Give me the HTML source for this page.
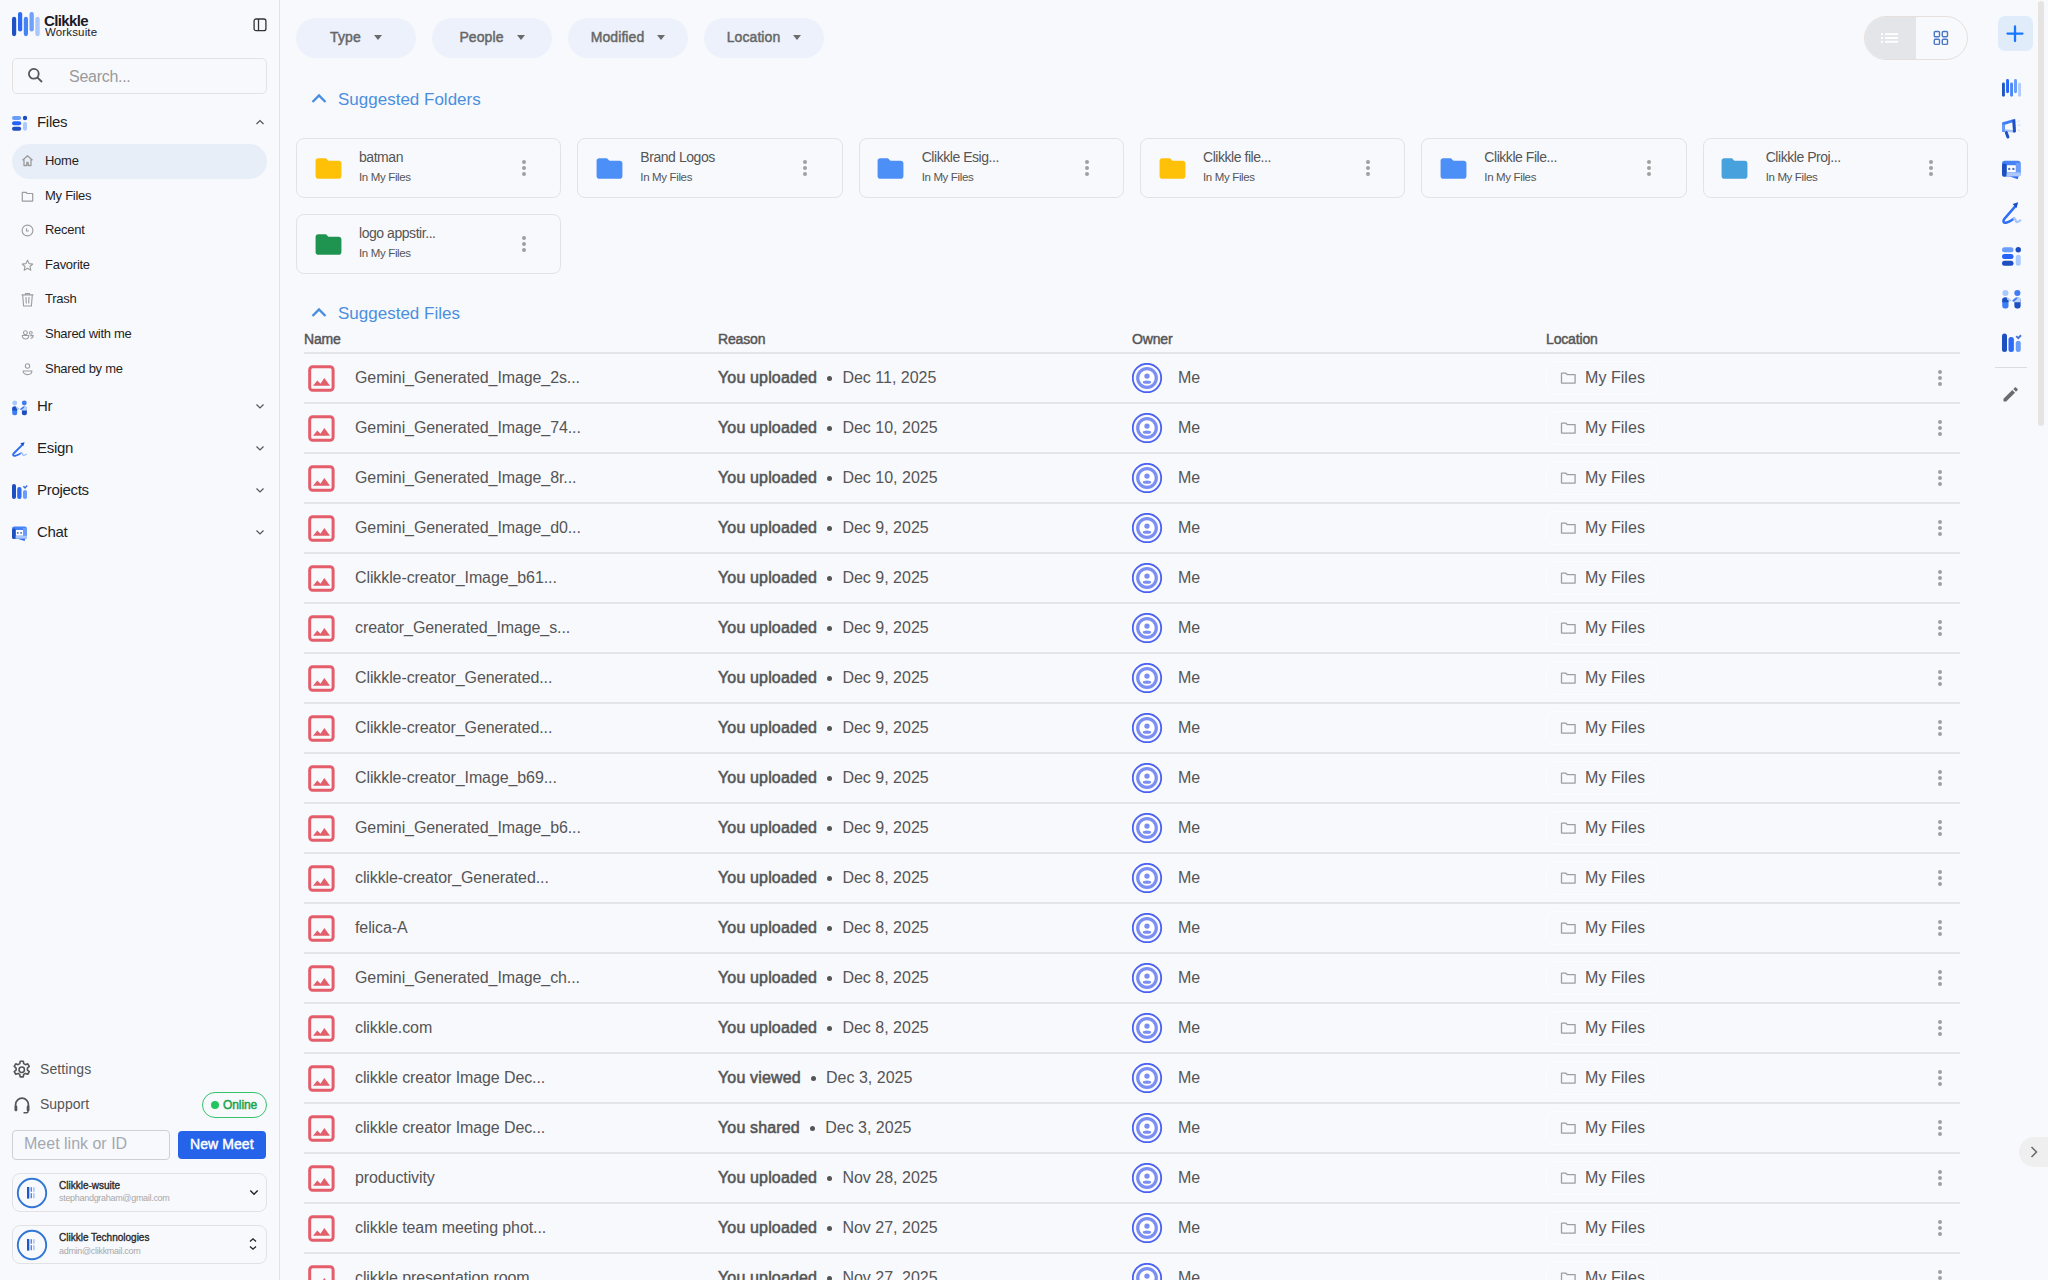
<!DOCTYPE html><html><head><meta charset="utf-8"><title>Clikkle Files</title><style>
*{box-sizing:border-box;margin:0;padding:0}
html,body{width:2048px;height:1280px;overflow:hidden;background:#f8f9fd;font-family:"Liberation Sans",sans-serif;color:#222}
svg{display:block}
.ab{position:absolute;white-space:nowrap}
#side{position:absolute;left:0;top:0;width:280px;height:1280px;border-right:1px solid #e1e1e3}
.nav{position:absolute;left:45px;font-size:13px;color:#1f1f1f;line-height:16px;letter-spacing:-0.27px;white-space:nowrap}
.navi{position:absolute;left:21px}
.sec{position:absolute;left:37px;font-size:15px;color:#1f1f1f;line-height:18px;letter-spacing:-0.3px;white-space:nowrap}
.seci{position:absolute;left:12px}
.chev{position:absolute;left:255px}
.chip{position:absolute;top:18px;width:120px;height:40px;border-radius:20px;background:#edf1fb;font-size:14px;font-weight:normal;-webkit-text-stroke-width:0.45px;color:#666;display:flex;align-items:center;justify-content:center;letter-spacing:0.1px;padding-bottom:2px}
.chip .tri{width:0;height:0;border-left:4.5px solid transparent;border-right:4.5px solid transparent;border-top:5px solid #6b6b6b;margin-left:13px;margin-top:1px}
.card{position:absolute;width:266px;height:60px;border:1px solid #e2e3e8;border-radius:8px}
.card svg.f{position:absolute;left:15.7px;top:13.6px}
.card .t1{position:absolute;left:62px;top:10px;font-size:14px;color:#555;line-height:16px;letter-spacing:-0.45px;white-space:nowrap}
.card .t2{position:absolute;left:62px;top:31px;font-size:11.5px;color:#555;line-height:14px;letter-spacing:-0.35px;white-space:nowrap}
.dots{position:absolute;width:4px;height:16px}
.dots i{display:block;width:4px;height:4px;border-radius:2px;background:#a0a0a0;margin-bottom:2px}
.row{position:absolute;left:304px;width:1656px;height:50px;border-bottom:2px solid #e4e5ea}
.row .ic{position:absolute;left:4px;top:11px}
.row .tx{position:absolute;top:14.6px;font-size:16px;color:#555;line-height:18px;white-space:nowrap}
.row .nm{left:51px;letter-spacing:-0.1px}
.row .rs{left:414px}
.row .rs b{font-weight:normal;-webkit-text-stroke-width:0.55px;letter-spacing:0.15px}
.row .bul{display:inline-block;width:5px;height:5px;border-radius:50%;background:#555;vertical-align:middle;position:relative;top:0.4px;margin:0 10px 0 10.3px}
.row .av{position:absolute;left:828px;top:9px}
.row .me{left:874px}
.row .loc{position:absolute;left:1242px;top:7px;width:112px;height:34px;border:1px solid #fdfdff;border-radius:10px}
.row .locf{position:absolute;left:1256px;top:18px}
.row .lt{left:1281px;letter-spacing:0.05px}
.row .dots{left:1634px;top:16px}
.rail{position:absolute;left:2001px}
</style></head><body>
<div id="side">
<svg class="ab" style="left:0;top:0" width="44" height="44" viewBox="0 0 44 44">
<rect x="12" y="16.8" width="4.2" height="19.4" rx="2.1" fill="#1f50c4"/>
<rect x="18" y="12" width="4.2" height="19.6" rx="2.1" fill="#2a6af6"/>
<rect x="23.8" y="16.8" width="4.2" height="19.4" rx="2.1" fill="#4584f7"/>
<rect x="29.5" y="12" width="4.3" height="19.6" rx="2.1" fill="#6fa1fa"/>
<rect x="35.3" y="16.8" width="4.4" height="19.4" rx="2.2" fill="#abc8fc"/>
</svg>
<div class="ab" style="left:44px;top:12px;font-size:15px;font-weight:bold;color:#1b1b25;line-height:17px;letter-spacing:-0.62px">Clikkle</div>
<div class="ab" style="left:45px;top:26px;font-size:11.5px;color:#1b1b25;line-height:12px;letter-spacing:0.15px">Worksuite</div>
<svg class="ab" style="left:253px;top:18px" width="14" height="14" viewBox="0 0 14 14" fill="none" stroke="#333" stroke-width="1.3">
<rect x="1.1" y="1" width="11.8" height="11.7" rx="2"/><line x1="5.5" y1="1" x2="5.5" y2="12.7"/></svg>
<div class="ab" style="left:12px;top:58px;width:255px;height:36px;border:1px solid #e6e1e1;border-radius:5px"></div>
<svg class="ab" style="left:27px;top:67px" width="17" height="17" viewBox="0 0 17 17" fill="none" stroke="#555" stroke-width="1.8">
<circle cx="6.8" cy="6.8" r="4.9"/><line x1="10.3" y1="10.3" x2="15" y2="15"/></svg>
<div class="ab" style="left:69px;top:68px;font-size:16px;color:#9a9a9a;line-height:18px;letter-spacing:-0.28px">Search...</div>
<div class="seci" style="top:115px"><svg width="16" height="16" viewBox="0 0 16 16">
<rect x="0" y="1" width="9.2" height="4" rx="2" fill="#6a9dfa"/>
<rect x="0" y="6.3" width="9.2" height="4" rx="2" fill="#2563f8"/>
<rect x="0" y="11.8" width="9.2" height="4" rx="2" fill="#1d4fc0"/>
<circle cx="13" cy="3" r="2.2" fill="#1b4dc1"/>
<rect x="11" y="7" width="4" height="8.8" rx="2" fill="#abc9fc"/></svg></div>
<div class="sec" style="top:113px">Files</div>
<svg class="chev" style="top:119px" width="10" height="7" viewBox="0 0 10 7" fill="none" stroke="#555" stroke-width="1.2"><path d="M1.5 5L5 1.5L8.5 5"/></svg>
<div class="ab" style="left:12px;top:144px;width:255px;height:35px;border-radius:17.5px;background:#e8eef8"></div>
<div class="navi" style="top:154.3px"><svg width="13" height="13" viewBox="0 0 13 13" fill="none" stroke="#9c9c9c" stroke-width="1.3" stroke-linejoin="round"><path d="M1.5 6.3L6.5 1.8L11.5 6.3M3 5v6.5h2.8V8.5h1.4v3H10V5"/></svg></div>
<div class="nav" style="top:152.5px">Home</div>
<div class="navi" style="top:189.8px"><svg width="13" height="13" viewBox="0 0 13 13" fill="none" stroke="#9c9c9c" stroke-width="1.2" stroke-linejoin="round"><path d="M1.3 2.4h3.8l1 1.1h5.6v7.6H1.3z"/></svg></div>
<div class="nav" style="top:188.0px">My Files</div>
<div class="navi" style="top:224.10000000000002px"><svg width="13" height="13" viewBox="0 0 13 13" fill="none" stroke="#9c9c9c" stroke-width="1.1"><circle cx="6.5" cy="6.5" r="5.4"/><path d="M5.5 4.2v2.8h2.3"/></svg></div>
<div class="nav" style="top:222.3px">Recent</div>
<div class="navi" style="top:258.6px"><svg width="13" height="13" viewBox="0 0 13 13" fill="none" stroke="#9c9c9c" stroke-width="1.1" stroke-linejoin="round"><path d="M6.5 1.2l1.55 3.4l3.7.4l-2.75 2.5l.8 3.65L6.5 9.3l-3.3 1.85l.8-3.65L1.25 5l3.7-.4z"/></svg></div>
<div class="nav" style="top:256.8px">Favorite</div>
<div class="navi" style="top:291.5px"><svg width="13" height="15" viewBox="0 0 13 15" fill="none" stroke="#9c9c9c" stroke-width="1.1" stroke-linejoin="round"><path d="M0.6 2.9H12.4M4.5 2.8V1.5H8.5V2.8M1.7 2.9L2.6 14H10.4L11.3 2.9M5 5L5.3 11.5M8 5L7.7 11.5"/></svg></div>
<div class="nav" style="top:291.1px">Trash</div>
<div class="navi" style="top:327.8px"><svg width="13" height="13" viewBox="0 0 13 13" fill="none" stroke="#9c9c9c" stroke-width="1.05"><circle cx="4.4" cy="4.7" r="1.9"/><path d="M1.2 7.5H7.8C7.8 9.7 6.3 10.9 4.5 10.9C2.7 10.9 1.2 9.7 1.2 7.5z"/><circle cx="9.8" cy="4.8" r="1.4"/><path d="M9.3 7.6H12.2C12.2 9.3 11.2 10.2 9.7 10.4"/></svg></div>
<div class="nav" style="top:326.0px">Shared with me</div>
<div class="navi" style="top:362.5px"><svg width="13" height="13" viewBox="0 0 13 13" fill="none" stroke="#9c9c9c" stroke-width="1.05"><circle cx="6.5" cy="3" r="2.2"/><path d="M2.1 8H10.9C10.9 10.4 9 11.6 6.5 11.6C4 11.6 2.1 10.4 2.1 8z"/></svg></div>
<div class="nav" style="top:360.7px">Shared by me</div>
<div class="seci" style="top:398.5px"><svg width="16" height="16" viewBox="0 0 16 16" overflow="visible">
<circle cx="2.75" cy="3.95" r="2.45" fill="#a9c8fc"/>
<circle cx="12.3" cy="3.95" r="2.45" fill="#3f7cf5"/>
<path d="M0.2 9.6a2.1 2.1 0 0 1 2.1-2.1h0.8a2.1 2.1 0 0 1 2.1 2.1V14.2a2.1 2.1 0 0 1-2.1 2.1h-0.8a2.1 2.1 0 0 1-2.1-2.1z" fill="#3d7ef7"/>
<path d="M0.2 9.6a2.1 2.1 0 0 1 2.1-2.1h0.8a2.1 2.1 0 0 1 2.1 2.1V11.4H0.2z" fill="#1c4fc0"/>
<path d="M9.9 9.6a2.1 2.1 0 0 1 2.1-2.1h0.8a2.1 2.1 0 0 1 2.1 2.1V14.2a2.1 2.1 0 0 1-2.1 2.1h-0.8a2.1 2.1 0 0 1-2.1-2.1z" fill="#1d4fc0"/>
<path d="M9.9 9.6a2.1 2.1 0 0 1 2.1-2.1h0.8a2.1 2.1 0 0 1 2.1 2.1V11.4H9.9z" fill="#bcd4fc"/>
<path d="M4.6 8.7L6.6 10" stroke="#a9c8fc" stroke-width="1.5" stroke-linecap="round"/>
<path d="M9 10.2L11.4 8.4" stroke="#3f7cf5" stroke-width="1.5" stroke-linecap="round"/></svg></div>
<div class="sec" style="top:396.5px">Hr</div>
<svg class="chev" style="top:403.0px" width="10" height="7" viewBox="0 0 10 7" fill="none" stroke="#555" stroke-width="1.2"><path d="M1.5 1.5L5 5L8.5 1.5"/></svg>
<div class="seci" style="top:441.5px;left:11.8px"><svg width="15.2" height="15" viewBox="6 4.5 19.5 22.5" preserveAspectRatio="none" fill="none">
<path d="M19.2 8.8L8.3 21.5C6.8 23.5 7.5 25.6 10 25.2C12.8 24.8 15.5 22.8 17.8 21.2" stroke="#2f6ef5" stroke-width="2.6" stroke-linecap="round"/>
<path d="M17.8 21.2C19.5 20.2 19.4 23.2 20.3 24.2C21.3 25.1 23 24 24.3 22.8" stroke="#a8c5fb" stroke-width="2.2" stroke-linecap="round"/>
<path d="M22.2 4.7L16.6 6.5L20.5 10.4z" fill="#1a4cc8"/></svg></div>
<div class="sec" style="top:438.5px">Esign</div>
<svg class="chev" style="top:445.0px" width="10" height="7" viewBox="0 0 10 7" fill="none" stroke="#555" stroke-width="1.2"><path d="M1.5 1.5L5 5L8.5 1.5"/></svg>
<div class="seci" style="top:482.5px"><svg width="16" height="16" viewBox="0 0 16 16">
<rect x="0" y="1.1" width="4" height="14.8" rx="2" fill="#1d4fc0"/>
<rect x="5.2" y="3.9" width="4.3" height="12" rx="2" fill="#2a6cf8"/>
<rect x="11" y="7" width="4" height="8.9" rx="2" fill="#6a9dfa"/>
<path d="M11.4 3.3l1.6 1.6l2.2-2.3" stroke="#4672d8" stroke-width="1.5" fill="none"/></svg></div>
<div class="sec" style="top:480.5px">Projects</div>
<svg class="chev" style="top:487.0px" width="10" height="7" viewBox="0 0 10 7" fill="none" stroke="#555" stroke-width="1.2"><path d="M1.5 1.5L5 5L8.5 1.5"/></svg>
<div class="seci" style="top:524.5px"><svg width="16" height="16" viewBox="0 0 16 16" overflow="visible">
<rect x="0" y="1.4" width="14.85" height="12.6" rx="2.2" fill="#4581f7"/>
<rect x="11" y="3" width="3.85" height="9" fill="#6b9cf8"/>
<rect x="0" y="3.6" width="3.8" height="10.5" rx="1.8" fill="#1f50c0"/>
<rect x="3.7" y="10.8" width="11.15" height="2.8" fill="#abc7fc"/>
<path d="M6.3 13.9H13.2L12.6 16.1z" fill="#2a6af6"/>
<rect x="3.9" y="5" width="7.1" height="5.6" fill="#fff"/>
<circle cx="5.8" cy="7.9" r="0.95" fill="#4a70c8"/>
<circle cx="9.1" cy="7.9" r="0.95" fill="#4a70c8"/></svg></div>
<div class="sec" style="top:522.5px">Chat</div>
<svg class="chev" style="top:529.0px" width="10" height="7" viewBox="0 0 10 7" fill="none" stroke="#555" stroke-width="1.2"><path d="M1.5 1.5L5 5L8.5 1.5"/></svg>
<svg class="ab" style="left:11.2px;top:1058.8px" width="21.5" height="21.5" viewBox="0 0 24 24" fill="none" stroke="#555" stroke-width="1.8" stroke-linejoin="round">
<path d="M10.3 2.5h3.4l.5 2.7l1.9 1.1l2.6-.9l1.7 2.9l-2.1 1.8v2.2l2.1 1.8l-1.7 2.9l-2.6-.9l-1.9 1.1l-.5 2.7h-3.4l-.5-2.7l-1.9-1.1l-2.6.9l-1.7-2.9l2.1-1.8v-2.2l-2.1-1.8l1.7-2.9l2.6.9l1.9-1.1z"/>
<circle cx="12" cy="12" r="3"/></svg>
<div class="ab" style="left:40px;top:1060px;font-size:14px;color:#555;line-height:18px;letter-spacing:0.08px">Settings</div>
<svg class="ab" style="left:12.5px;top:1096px" width="18" height="18" viewBox="0 0 18 18" fill="none" stroke="#555">
<path d="M2.6 11V8.6a6.4 6.4 0 0 1 12.8 0V11" stroke-width="1.7"/>
<rect x="1.5" y="9.6" width="2.8" height="5.6" rx="1.3" fill="#555" stroke="none"/>
<rect x="13.7" y="9.6" width="2.8" height="5.6" rx="1.3" fill="#555" stroke="none"/>
<path d="M15 14.8v.6c0 .9-.6 1.4-1.4 1.4H10.5" stroke-width="1.5"/></svg>
<div class="ab" style="left:40px;top:1095px;font-size:14px;color:#555;line-height:18px">Support</div>
<div class="ab" style="left:202px;top:1092px;width:65px;height:26px;border:1.5px solid #35c46b;border-radius:13px"></div>
<div class="ab" style="left:211px;top:1100.6px;width:8px;height:8px;border-radius:4px;background:#22c55e"></div>
<div class="ab" style="left:223px;top:1098px;font-size:12px;font-weight:normal;-webkit-text-stroke-width:0.45px;color:#17a34a;line-height:14px;letter-spacing:-0.08px">Online</div>
<div class="ab" style="left:12px;top:1130px;width:158px;height:30px;border:1px solid #cfd0d4;border-radius:4px"></div>
<div class="ab" style="left:24px;top:1135px;font-size:16px;color:#a4a8b0;line-height:18px">Meet link or ID</div>
<div class="ab" style="left:178px;top:1131px;width:88px;height:28px;border-radius:4px;background:#2563eb"></div>
<div class="ab" style="left:190px;top:1136px;font-size:14px;font-weight:normal;-webkit-text-stroke-width:0.45px;color:#fff;line-height:17px;letter-spacing:0.08px">New Meet</div>
<div class="ab" style="left:12px;top:1173px;width:255px;height:39px;border:1px solid #e3e1e1;border-radius:8px"></div><svg class="ab" style="left:16px;top:1177px" width="32" height="32" viewBox="0 0 32 32">
<circle cx="16" cy="16" r="14.2" fill="none" stroke="#3277d6" stroke-width="1.9"/>
<rect x="11" y="10" width="2.3" height="11.6" fill="#1f55c8"/>
<rect x="14.6" y="10.2" width="1.3" height="4.5" fill="#3a7bf0"/>
<rect x="14.6" y="16.2" width="1.3" height="5" fill="#3a7bf0"/>
<rect x="17.3" y="10.2" width="1.2" height="4.5" fill="#8fb5f8"/>
<rect x="17.3" y="16.2" width="1.2" height="5" fill="#8fb5f8"/></svg><div class="ab" style="left:59px;top:1180px;font-size:10px;font-weight:normal;-webkit-text-stroke-width:0.35px;color:#2a2a2a;line-height:12px;letter-spacing:0px">Clikkle-wsuite</div><div class="ab" style="left:59px;top:1193px;font-size:9px;color:#a8a8a8;line-height:11px;letter-spacing:-0.3px">stephandgraham@gmail.com</div><svg class="ab" style="left:249px;top:1189px" width="10" height="7" viewBox="0 0 10 7" fill="none" stroke="#222" stroke-width="1.4"><path d="M1.3 1.5L5 5.2L8.7 1.5"/></svg>
<div class="ab" style="left:12px;top:1225px;width:255px;height:39px;border:1px solid #e3e1e1;border-radius:8px"></div><svg class="ab" style="left:16px;top:1229px" width="32" height="32" viewBox="0 0 32 32">
<circle cx="16" cy="16" r="14.2" fill="none" stroke="#3277d6" stroke-width="1.9"/>
<rect x="11" y="10" width="2.3" height="11.6" fill="#1f55c8"/>
<rect x="14.6" y="10.2" width="1.3" height="4.5" fill="#3a7bf0"/>
<rect x="14.6" y="16.2" width="1.3" height="5" fill="#3a7bf0"/>
<rect x="17.3" y="10.2" width="1.2" height="4.5" fill="#8fb5f8"/>
<rect x="17.3" y="16.2" width="1.2" height="5" fill="#8fb5f8"/></svg><div class="ab" style="left:59px;top:1231.5px;font-size:10px;font-weight:normal;-webkit-text-stroke-width:0.35px;color:#2a2a2a;line-height:12px;letter-spacing:0px">Clikkle Technologies</div><div class="ab" style="left:59px;top:1246px;font-size:9px;color:#a8a8a8;line-height:11px;letter-spacing:-0.3px">admin@clikkmail.com</div><svg class="ab" style="left:248px;top:1237px" width="10" height="14" viewBox="0 0 10 14" fill="none" stroke="#222" stroke-width="1.3"><path d="M2 4.5L5 1.8L8 4.5M2 9.5L5 12.2L8 9.5"/></svg>
</div>
<div class="chip" style="left:296px">Type<span class="tri"></span></div>
<div class="chip" style="left:432px">People<span class="tri"></span></div>
<div class="chip" style="left:568px">Modified<span class="tri"></span></div>
<div class="chip" style="left:704px">Location<span class="tri"></span></div>
<div class="ab" style="left:1864px;top:16px;width:104px;height:44px;border:1px solid #e6e0dd;border-radius:22px;overflow:hidden"><div style="position:absolute;left:0;top:0;width:51px;height:44px;background:#e4e5e9"></div></div>
<svg class="ab" style="left:1880px;top:32px" width="20" height="12" viewBox="0 0 20 12" fill="#fff">
<rect x="1" y="1.2" width="2" height="2"/><rect x="1" y="5" width="2" height="2"/><rect x="1" y="8.8" width="2" height="2"/>
<rect x="5" y="1.2" width="13.2" height="1.9"/><rect x="5" y="5" width="13.2" height="1.9"/><rect x="5" y="8.8" width="13.2" height="1.9"/></svg>
<svg class="ab" style="left:1932px;top:30px" width="18" height="16" viewBox="0 0 18 16" fill="none" stroke="#4a78c2" stroke-width="1.4">
<rect x="2.3" y="1.5" width="5.2" height="5.2" rx="1"/><rect x="10.3" y="1.5" width="5.2" height="5.2" rx="1"/>
<rect x="2.3" y="9.2" width="5.2" height="5.2" rx="1"/><rect x="10.3" y="9.2" width="5.2" height="5.2" rx="1"/></svg>
<div class="ab" style="left:1998px;top:16px;width:35px;height:35px;border-radius:7px;background:#e1ecfa"></div>
<svg class="ab" style="left:2005px;top:24px" width="20" height="20" viewBox="0 0 20 20" stroke="#1677ff" stroke-width="2.3" stroke-linecap="round"><path d="M10 2.5v14.5M2.5 9.6h15"/></svg>
<svg class="ab" style="left:310px;top:92px" width="18" height="12" viewBox="0 0 18 12" fill="none" stroke="#4a8ee0" stroke-width="2.4"><path d="M2.5 10L9 3.5L15.5 10"/></svg><div class="ab" style="left:338px;top:89.5px;font-size:17px;color:#4a8fe0;line-height:20px">Suggested Folders</div>
<div class="card" style="left:296.00px;top:138px;width:265.33px"><svg class="f" width="31" height="31" viewBox="0 0 24 24"><path fill="#ffc107" d="M10 4H4c-1.1 0-2 .9-2 2v12c0 1.1.9 2 2 2h16c1.1 0 2-.9 2-2V8c0-1.1-.9-2-2-2h-8l-2-2z"/></svg><div class="t1">batman</div><div class="t2">In My Files</div><div class="dots" style="left:225px;top:21px"><i></i><i></i><i></i></div></div>
<div class="card" style="left:577.33px;top:138px;width:265.33px"><svg class="f" width="31" height="31" viewBox="0 0 24 24"><path fill="#4b8ff7" d="M10 4H4c-1.1 0-2 .9-2 2v12c0 1.1.9 2 2 2h16c1.1 0 2-.9 2-2V8c0-1.1-.9-2-2-2h-8l-2-2z"/></svg><div class="t1">Brand Logos</div><div class="t2">In My Files</div><div class="dots" style="left:225px;top:21px"><i></i><i></i><i></i></div></div>
<div class="card" style="left:858.67px;top:138px;width:265.33px"><svg class="f" width="31" height="31" viewBox="0 0 24 24"><path fill="#4b8ff7" d="M10 4H4c-1.1 0-2 .9-2 2v12c0 1.1.9 2 2 2h16c1.1 0 2-.9 2-2V8c0-1.1-.9-2-2-2h-8l-2-2z"/></svg><div class="t1">Clikkle Esig...</div><div class="t2">In My Files</div><div class="dots" style="left:225px;top:21px"><i></i><i></i><i></i></div></div>
<div class="card" style="left:1140.00px;top:138px;width:265.33px"><svg class="f" width="31" height="31" viewBox="0 0 24 24"><path fill="#ffc107" d="M10 4H4c-1.1 0-2 .9-2 2v12c0 1.1.9 2 2 2h16c1.1 0 2-.9 2-2V8c0-1.1-.9-2-2-2h-8l-2-2z"/></svg><div class="t1">Clikkle file...</div><div class="t2">In My Files</div><div class="dots" style="left:225px;top:21px"><i></i><i></i><i></i></div></div>
<div class="card" style="left:1421.33px;top:138px;width:265.33px"><svg class="f" width="31" height="31" viewBox="0 0 24 24"><path fill="#4b8ff7" d="M10 4H4c-1.1 0-2 .9-2 2v12c0 1.1.9 2 2 2h16c1.1 0 2-.9 2-2V8c0-1.1-.9-2-2-2h-8l-2-2z"/></svg><div class="t1">Clikkle File...</div><div class="t2">In My Files</div><div class="dots" style="left:225px;top:21px"><i></i><i></i><i></i></div></div>
<div class="card" style="left:1702.67px;top:138px;width:265.33px"><svg class="f" width="31" height="31" viewBox="0 0 24 24"><path fill="#47a1dd" d="M10 4H4c-1.1 0-2 .9-2 2v12c0 1.1.9 2 2 2h16c1.1 0 2-.9 2-2V8c0-1.1-.9-2-2-2h-8l-2-2z"/></svg><div class="t1">Clikkle Proj...</div><div class="t2">In My Files</div><div class="dots" style="left:225px;top:21px"><i></i><i></i><i></i></div></div>
<div class="card" style="left:296.00px;top:214px;width:265.33px"><svg class="f" width="31" height="31" viewBox="0 0 24 24"><path fill="#1f9450" d="M10 4H4c-1.1 0-2 .9-2 2v12c0 1.1.9 2 2 2h16c1.1 0 2-.9 2-2V8c0-1.1-.9-2-2-2h-8l-2-2z"/></svg><div class="t1">logo appstir...</div><div class="t2">In My Files</div><div class="dots" style="left:225px;top:21px"><i></i><i></i><i></i></div></div>
<svg class="ab" style="left:310px;top:306px" width="18" height="12" viewBox="0 0 18 12" fill="none" stroke="#4a8ee0" stroke-width="2.4"><path d="M2.5 10L9 3.5L15.5 10"/></svg><div class="ab" style="left:338px;top:303.5px;font-size:17px;color:#4a8fe0;line-height:20px">Suggested Files</div>
<div class="ab" style="left:304px;top:331px;font-size:14px;font-weight:normal;-webkit-text-stroke-width:0.45px;color:#555;line-height:16px;letter-spacing:-0.15px">Name</div>
<div class="ab" style="left:718px;top:331px;font-size:14px;font-weight:normal;-webkit-text-stroke-width:0.45px;color:#555;line-height:16px;letter-spacing:-0.15px">Reason</div>
<div class="ab" style="left:1132px;top:331px;font-size:14px;font-weight:normal;-webkit-text-stroke-width:0.45px;color:#555;line-height:16px;letter-spacing:-0.15px">Owner</div>
<div class="ab" style="left:1546px;top:331px;font-size:14px;font-weight:normal;-webkit-text-stroke-width:0.45px;color:#555;line-height:16px;letter-spacing:-0.15px">Location</div>
<div class="ab" style="left:304px;top:352px;width:1656px;height:2px;background:#e4e5ea"></div>
<div class="row" style="top:354px"><svg class="ic" width="28" height="28" viewBox="0 0 28 28">
<rect x="1.7" y="1.8" width="23.4" height="23.4" rx="3" fill="none" stroke="#e35d6a" stroke-width="3"/>
<path d="M5 20.8L9.3 15.5L12.5 18.7L16.3 13.1L22 20.8z" fill="#e35d6a"/></svg><div class="tx nm">Gemini_Generated_Image_2s...</div><div class="tx rs"><b>You uploaded</b><span class="bul"></span>Dec 11, 2025</div><svg class="av" width="38" height="38" viewBox="0 0 38 38">
<circle cx="15" cy="15" r="14.2" fill="none" stroke="#4a60f2" stroke-width="1.8"/>
<circle cx="15" cy="15" r="10.9" fill="#7b8ff3"/>
<circle cx="15" cy="15" r="7.7" fill="#fff"/>
<circle cx="15" cy="13.1" r="2.7" fill="#7b8ff3"/>
<ellipse cx="15" cy="19.2" rx="4.2" ry="1.6" fill="#7b8ff3"/></svg><div class="tx me">Me</div><div class="loc"></div><svg class="locf" width="17" height="14" viewBox="0 0 17 14" fill="none" stroke="#9e9e9e" stroke-width="1.3" stroke-linejoin="round"><path d="M1.5 1.2h4.4l1.4 1.4h7.8v8.5H1.5z"/></svg><div class="tx lt">My Files</div><div class="dots"><i></i><i></i><i></i></div></div>
<div class="row" style="top:404px"><svg class="ic" width="28" height="28" viewBox="0 0 28 28">
<rect x="1.7" y="1.8" width="23.4" height="23.4" rx="3" fill="none" stroke="#e35d6a" stroke-width="3"/>
<path d="M5 20.8L9.3 15.5L12.5 18.7L16.3 13.1L22 20.8z" fill="#e35d6a"/></svg><div class="tx nm">Gemini_Generated_Image_74...</div><div class="tx rs"><b>You uploaded</b><span class="bul"></span>Dec 10, 2025</div><svg class="av" width="38" height="38" viewBox="0 0 38 38">
<circle cx="15" cy="15" r="14.2" fill="none" stroke="#4a60f2" stroke-width="1.8"/>
<circle cx="15" cy="15" r="10.9" fill="#7b8ff3"/>
<circle cx="15" cy="15" r="7.7" fill="#fff"/>
<circle cx="15" cy="13.1" r="2.7" fill="#7b8ff3"/>
<ellipse cx="15" cy="19.2" rx="4.2" ry="1.6" fill="#7b8ff3"/></svg><div class="tx me">Me</div><div class="loc"></div><svg class="locf" width="17" height="14" viewBox="0 0 17 14" fill="none" stroke="#9e9e9e" stroke-width="1.3" stroke-linejoin="round"><path d="M1.5 1.2h4.4l1.4 1.4h7.8v8.5H1.5z"/></svg><div class="tx lt">My Files</div><div class="dots"><i></i><i></i><i></i></div></div>
<div class="row" style="top:454px"><svg class="ic" width="28" height="28" viewBox="0 0 28 28">
<rect x="1.7" y="1.8" width="23.4" height="23.4" rx="3" fill="none" stroke="#e35d6a" stroke-width="3"/>
<path d="M5 20.8L9.3 15.5L12.5 18.7L16.3 13.1L22 20.8z" fill="#e35d6a"/></svg><div class="tx nm">Gemini_Generated_Image_8r...</div><div class="tx rs"><b>You uploaded</b><span class="bul"></span>Dec 10, 2025</div><svg class="av" width="38" height="38" viewBox="0 0 38 38">
<circle cx="15" cy="15" r="14.2" fill="none" stroke="#4a60f2" stroke-width="1.8"/>
<circle cx="15" cy="15" r="10.9" fill="#7b8ff3"/>
<circle cx="15" cy="15" r="7.7" fill="#fff"/>
<circle cx="15" cy="13.1" r="2.7" fill="#7b8ff3"/>
<ellipse cx="15" cy="19.2" rx="4.2" ry="1.6" fill="#7b8ff3"/></svg><div class="tx me">Me</div><div class="loc"></div><svg class="locf" width="17" height="14" viewBox="0 0 17 14" fill="none" stroke="#9e9e9e" stroke-width="1.3" stroke-linejoin="round"><path d="M1.5 1.2h4.4l1.4 1.4h7.8v8.5H1.5z"/></svg><div class="tx lt">My Files</div><div class="dots"><i></i><i></i><i></i></div></div>
<div class="row" style="top:504px"><svg class="ic" width="28" height="28" viewBox="0 0 28 28">
<rect x="1.7" y="1.8" width="23.4" height="23.4" rx="3" fill="none" stroke="#e35d6a" stroke-width="3"/>
<path d="M5 20.8L9.3 15.5L12.5 18.7L16.3 13.1L22 20.8z" fill="#e35d6a"/></svg><div class="tx nm">Gemini_Generated_Image_d0...</div><div class="tx rs"><b>You uploaded</b><span class="bul"></span>Dec 9, 2025</div><svg class="av" width="38" height="38" viewBox="0 0 38 38">
<circle cx="15" cy="15" r="14.2" fill="none" stroke="#4a60f2" stroke-width="1.8"/>
<circle cx="15" cy="15" r="10.9" fill="#7b8ff3"/>
<circle cx="15" cy="15" r="7.7" fill="#fff"/>
<circle cx="15" cy="13.1" r="2.7" fill="#7b8ff3"/>
<ellipse cx="15" cy="19.2" rx="4.2" ry="1.6" fill="#7b8ff3"/></svg><div class="tx me">Me</div><div class="loc"></div><svg class="locf" width="17" height="14" viewBox="0 0 17 14" fill="none" stroke="#9e9e9e" stroke-width="1.3" stroke-linejoin="round"><path d="M1.5 1.2h4.4l1.4 1.4h7.8v8.5H1.5z"/></svg><div class="tx lt">My Files</div><div class="dots"><i></i><i></i><i></i></div></div>
<div class="row" style="top:554px"><svg class="ic" width="28" height="28" viewBox="0 0 28 28">
<rect x="1.7" y="1.8" width="23.4" height="23.4" rx="3" fill="none" stroke="#e35d6a" stroke-width="3"/>
<path d="M5 20.8L9.3 15.5L12.5 18.7L16.3 13.1L22 20.8z" fill="#e35d6a"/></svg><div class="tx nm">Clikkle-creator_Image_b61...</div><div class="tx rs"><b>You uploaded</b><span class="bul"></span>Dec 9, 2025</div><svg class="av" width="38" height="38" viewBox="0 0 38 38">
<circle cx="15" cy="15" r="14.2" fill="none" stroke="#4a60f2" stroke-width="1.8"/>
<circle cx="15" cy="15" r="10.9" fill="#7b8ff3"/>
<circle cx="15" cy="15" r="7.7" fill="#fff"/>
<circle cx="15" cy="13.1" r="2.7" fill="#7b8ff3"/>
<ellipse cx="15" cy="19.2" rx="4.2" ry="1.6" fill="#7b8ff3"/></svg><div class="tx me">Me</div><div class="loc"></div><svg class="locf" width="17" height="14" viewBox="0 0 17 14" fill="none" stroke="#9e9e9e" stroke-width="1.3" stroke-linejoin="round"><path d="M1.5 1.2h4.4l1.4 1.4h7.8v8.5H1.5z"/></svg><div class="tx lt">My Files</div><div class="dots"><i></i><i></i><i></i></div></div>
<div class="row" style="top:604px"><svg class="ic" width="28" height="28" viewBox="0 0 28 28">
<rect x="1.7" y="1.8" width="23.4" height="23.4" rx="3" fill="none" stroke="#e35d6a" stroke-width="3"/>
<path d="M5 20.8L9.3 15.5L12.5 18.7L16.3 13.1L22 20.8z" fill="#e35d6a"/></svg><div class="tx nm">creator_Generated_Image_s...</div><div class="tx rs"><b>You uploaded</b><span class="bul"></span>Dec 9, 2025</div><svg class="av" width="38" height="38" viewBox="0 0 38 38">
<circle cx="15" cy="15" r="14.2" fill="none" stroke="#4a60f2" stroke-width="1.8"/>
<circle cx="15" cy="15" r="10.9" fill="#7b8ff3"/>
<circle cx="15" cy="15" r="7.7" fill="#fff"/>
<circle cx="15" cy="13.1" r="2.7" fill="#7b8ff3"/>
<ellipse cx="15" cy="19.2" rx="4.2" ry="1.6" fill="#7b8ff3"/></svg><div class="tx me">Me</div><div class="loc"></div><svg class="locf" width="17" height="14" viewBox="0 0 17 14" fill="none" stroke="#9e9e9e" stroke-width="1.3" stroke-linejoin="round"><path d="M1.5 1.2h4.4l1.4 1.4h7.8v8.5H1.5z"/></svg><div class="tx lt">My Files</div><div class="dots"><i></i><i></i><i></i></div></div>
<div class="row" style="top:654px"><svg class="ic" width="28" height="28" viewBox="0 0 28 28">
<rect x="1.7" y="1.8" width="23.4" height="23.4" rx="3" fill="none" stroke="#e35d6a" stroke-width="3"/>
<path d="M5 20.8L9.3 15.5L12.5 18.7L16.3 13.1L22 20.8z" fill="#e35d6a"/></svg><div class="tx nm">Clikkle-creator_Generated...</div><div class="tx rs"><b>You uploaded</b><span class="bul"></span>Dec 9, 2025</div><svg class="av" width="38" height="38" viewBox="0 0 38 38">
<circle cx="15" cy="15" r="14.2" fill="none" stroke="#4a60f2" stroke-width="1.8"/>
<circle cx="15" cy="15" r="10.9" fill="#7b8ff3"/>
<circle cx="15" cy="15" r="7.7" fill="#fff"/>
<circle cx="15" cy="13.1" r="2.7" fill="#7b8ff3"/>
<ellipse cx="15" cy="19.2" rx="4.2" ry="1.6" fill="#7b8ff3"/></svg><div class="tx me">Me</div><div class="loc"></div><svg class="locf" width="17" height="14" viewBox="0 0 17 14" fill="none" stroke="#9e9e9e" stroke-width="1.3" stroke-linejoin="round"><path d="M1.5 1.2h4.4l1.4 1.4h7.8v8.5H1.5z"/></svg><div class="tx lt">My Files</div><div class="dots"><i></i><i></i><i></i></div></div>
<div class="row" style="top:704px"><svg class="ic" width="28" height="28" viewBox="0 0 28 28">
<rect x="1.7" y="1.8" width="23.4" height="23.4" rx="3" fill="none" stroke="#e35d6a" stroke-width="3"/>
<path d="M5 20.8L9.3 15.5L12.5 18.7L16.3 13.1L22 20.8z" fill="#e35d6a"/></svg><div class="tx nm">Clikkle-creator_Generated...</div><div class="tx rs"><b>You uploaded</b><span class="bul"></span>Dec 9, 2025</div><svg class="av" width="38" height="38" viewBox="0 0 38 38">
<circle cx="15" cy="15" r="14.2" fill="none" stroke="#4a60f2" stroke-width="1.8"/>
<circle cx="15" cy="15" r="10.9" fill="#7b8ff3"/>
<circle cx="15" cy="15" r="7.7" fill="#fff"/>
<circle cx="15" cy="13.1" r="2.7" fill="#7b8ff3"/>
<ellipse cx="15" cy="19.2" rx="4.2" ry="1.6" fill="#7b8ff3"/></svg><div class="tx me">Me</div><div class="loc"></div><svg class="locf" width="17" height="14" viewBox="0 0 17 14" fill="none" stroke="#9e9e9e" stroke-width="1.3" stroke-linejoin="round"><path d="M1.5 1.2h4.4l1.4 1.4h7.8v8.5H1.5z"/></svg><div class="tx lt">My Files</div><div class="dots"><i></i><i></i><i></i></div></div>
<div class="row" style="top:754px"><svg class="ic" width="28" height="28" viewBox="0 0 28 28">
<rect x="1.7" y="1.8" width="23.4" height="23.4" rx="3" fill="none" stroke="#e35d6a" stroke-width="3"/>
<path d="M5 20.8L9.3 15.5L12.5 18.7L16.3 13.1L22 20.8z" fill="#e35d6a"/></svg><div class="tx nm">Clikkle-creator_Image_b69...</div><div class="tx rs"><b>You uploaded</b><span class="bul"></span>Dec 9, 2025</div><svg class="av" width="38" height="38" viewBox="0 0 38 38">
<circle cx="15" cy="15" r="14.2" fill="none" stroke="#4a60f2" stroke-width="1.8"/>
<circle cx="15" cy="15" r="10.9" fill="#7b8ff3"/>
<circle cx="15" cy="15" r="7.7" fill="#fff"/>
<circle cx="15" cy="13.1" r="2.7" fill="#7b8ff3"/>
<ellipse cx="15" cy="19.2" rx="4.2" ry="1.6" fill="#7b8ff3"/></svg><div class="tx me">Me</div><div class="loc"></div><svg class="locf" width="17" height="14" viewBox="0 0 17 14" fill="none" stroke="#9e9e9e" stroke-width="1.3" stroke-linejoin="round"><path d="M1.5 1.2h4.4l1.4 1.4h7.8v8.5H1.5z"/></svg><div class="tx lt">My Files</div><div class="dots"><i></i><i></i><i></i></div></div>
<div class="row" style="top:804px"><svg class="ic" width="28" height="28" viewBox="0 0 28 28">
<rect x="1.7" y="1.8" width="23.4" height="23.4" rx="3" fill="none" stroke="#e35d6a" stroke-width="3"/>
<path d="M5 20.8L9.3 15.5L12.5 18.7L16.3 13.1L22 20.8z" fill="#e35d6a"/></svg><div class="tx nm">Gemini_Generated_Image_b6...</div><div class="tx rs"><b>You uploaded</b><span class="bul"></span>Dec 9, 2025</div><svg class="av" width="38" height="38" viewBox="0 0 38 38">
<circle cx="15" cy="15" r="14.2" fill="none" stroke="#4a60f2" stroke-width="1.8"/>
<circle cx="15" cy="15" r="10.9" fill="#7b8ff3"/>
<circle cx="15" cy="15" r="7.7" fill="#fff"/>
<circle cx="15" cy="13.1" r="2.7" fill="#7b8ff3"/>
<ellipse cx="15" cy="19.2" rx="4.2" ry="1.6" fill="#7b8ff3"/></svg><div class="tx me">Me</div><div class="loc"></div><svg class="locf" width="17" height="14" viewBox="0 0 17 14" fill="none" stroke="#9e9e9e" stroke-width="1.3" stroke-linejoin="round"><path d="M1.5 1.2h4.4l1.4 1.4h7.8v8.5H1.5z"/></svg><div class="tx lt">My Files</div><div class="dots"><i></i><i></i><i></i></div></div>
<div class="row" style="top:854px"><svg class="ic" width="28" height="28" viewBox="0 0 28 28">
<rect x="1.7" y="1.8" width="23.4" height="23.4" rx="3" fill="none" stroke="#e35d6a" stroke-width="3"/>
<path d="M5 20.8L9.3 15.5L12.5 18.7L16.3 13.1L22 20.8z" fill="#e35d6a"/></svg><div class="tx nm">clikkle-creator_Generated...</div><div class="tx rs"><b>You uploaded</b><span class="bul"></span>Dec 8, 2025</div><svg class="av" width="38" height="38" viewBox="0 0 38 38">
<circle cx="15" cy="15" r="14.2" fill="none" stroke="#4a60f2" stroke-width="1.8"/>
<circle cx="15" cy="15" r="10.9" fill="#7b8ff3"/>
<circle cx="15" cy="15" r="7.7" fill="#fff"/>
<circle cx="15" cy="13.1" r="2.7" fill="#7b8ff3"/>
<ellipse cx="15" cy="19.2" rx="4.2" ry="1.6" fill="#7b8ff3"/></svg><div class="tx me">Me</div><div class="loc"></div><svg class="locf" width="17" height="14" viewBox="0 0 17 14" fill="none" stroke="#9e9e9e" stroke-width="1.3" stroke-linejoin="round"><path d="M1.5 1.2h4.4l1.4 1.4h7.8v8.5H1.5z"/></svg><div class="tx lt">My Files</div><div class="dots"><i></i><i></i><i></i></div></div>
<div class="row" style="top:904px"><svg class="ic" width="28" height="28" viewBox="0 0 28 28">
<rect x="1.7" y="1.8" width="23.4" height="23.4" rx="3" fill="none" stroke="#e35d6a" stroke-width="3"/>
<path d="M5 20.8L9.3 15.5L12.5 18.7L16.3 13.1L22 20.8z" fill="#e35d6a"/></svg><div class="tx nm">felica-A</div><div class="tx rs"><b>You uploaded</b><span class="bul"></span>Dec 8, 2025</div><svg class="av" width="38" height="38" viewBox="0 0 38 38">
<circle cx="15" cy="15" r="14.2" fill="none" stroke="#4a60f2" stroke-width="1.8"/>
<circle cx="15" cy="15" r="10.9" fill="#7b8ff3"/>
<circle cx="15" cy="15" r="7.7" fill="#fff"/>
<circle cx="15" cy="13.1" r="2.7" fill="#7b8ff3"/>
<ellipse cx="15" cy="19.2" rx="4.2" ry="1.6" fill="#7b8ff3"/></svg><div class="tx me">Me</div><div class="loc"></div><svg class="locf" width="17" height="14" viewBox="0 0 17 14" fill="none" stroke="#9e9e9e" stroke-width="1.3" stroke-linejoin="round"><path d="M1.5 1.2h4.4l1.4 1.4h7.8v8.5H1.5z"/></svg><div class="tx lt">My Files</div><div class="dots"><i></i><i></i><i></i></div></div>
<div class="row" style="top:954px"><svg class="ic" width="28" height="28" viewBox="0 0 28 28">
<rect x="1.7" y="1.8" width="23.4" height="23.4" rx="3" fill="none" stroke="#e35d6a" stroke-width="3"/>
<path d="M5 20.8L9.3 15.5L12.5 18.7L16.3 13.1L22 20.8z" fill="#e35d6a"/></svg><div class="tx nm">Gemini_Generated_Image_ch...</div><div class="tx rs"><b>You uploaded</b><span class="bul"></span>Dec 8, 2025</div><svg class="av" width="38" height="38" viewBox="0 0 38 38">
<circle cx="15" cy="15" r="14.2" fill="none" stroke="#4a60f2" stroke-width="1.8"/>
<circle cx="15" cy="15" r="10.9" fill="#7b8ff3"/>
<circle cx="15" cy="15" r="7.7" fill="#fff"/>
<circle cx="15" cy="13.1" r="2.7" fill="#7b8ff3"/>
<ellipse cx="15" cy="19.2" rx="4.2" ry="1.6" fill="#7b8ff3"/></svg><div class="tx me">Me</div><div class="loc"></div><svg class="locf" width="17" height="14" viewBox="0 0 17 14" fill="none" stroke="#9e9e9e" stroke-width="1.3" stroke-linejoin="round"><path d="M1.5 1.2h4.4l1.4 1.4h7.8v8.5H1.5z"/></svg><div class="tx lt">My Files</div><div class="dots"><i></i><i></i><i></i></div></div>
<div class="row" style="top:1004px"><svg class="ic" width="28" height="28" viewBox="0 0 28 28">
<rect x="1.7" y="1.8" width="23.4" height="23.4" rx="3" fill="none" stroke="#e35d6a" stroke-width="3"/>
<path d="M5 20.8L9.3 15.5L12.5 18.7L16.3 13.1L22 20.8z" fill="#e35d6a"/></svg><div class="tx nm">clikkle.com</div><div class="tx rs"><b>You uploaded</b><span class="bul"></span>Dec 8, 2025</div><svg class="av" width="38" height="38" viewBox="0 0 38 38">
<circle cx="15" cy="15" r="14.2" fill="none" stroke="#4a60f2" stroke-width="1.8"/>
<circle cx="15" cy="15" r="10.9" fill="#7b8ff3"/>
<circle cx="15" cy="15" r="7.7" fill="#fff"/>
<circle cx="15" cy="13.1" r="2.7" fill="#7b8ff3"/>
<ellipse cx="15" cy="19.2" rx="4.2" ry="1.6" fill="#7b8ff3"/></svg><div class="tx me">Me</div><div class="loc"></div><svg class="locf" width="17" height="14" viewBox="0 0 17 14" fill="none" stroke="#9e9e9e" stroke-width="1.3" stroke-linejoin="round"><path d="M1.5 1.2h4.4l1.4 1.4h7.8v8.5H1.5z"/></svg><div class="tx lt">My Files</div><div class="dots"><i></i><i></i><i></i></div></div>
<div class="row" style="top:1054px"><svg class="ic" width="28" height="28" viewBox="0 0 28 28">
<rect x="1.7" y="1.8" width="23.4" height="23.4" rx="3" fill="none" stroke="#e35d6a" stroke-width="3"/>
<path d="M5 20.8L9.3 15.5L12.5 18.7L16.3 13.1L22 20.8z" fill="#e35d6a"/></svg><div class="tx nm">clikkle creator Image Dec...</div><div class="tx rs"><b>You viewed</b><span class="bul"></span>Dec 3, 2025</div><svg class="av" width="38" height="38" viewBox="0 0 38 38">
<circle cx="15" cy="15" r="14.2" fill="none" stroke="#4a60f2" stroke-width="1.8"/>
<circle cx="15" cy="15" r="10.9" fill="#7b8ff3"/>
<circle cx="15" cy="15" r="7.7" fill="#fff"/>
<circle cx="15" cy="13.1" r="2.7" fill="#7b8ff3"/>
<ellipse cx="15" cy="19.2" rx="4.2" ry="1.6" fill="#7b8ff3"/></svg><div class="tx me">Me</div><div class="loc"></div><svg class="locf" width="17" height="14" viewBox="0 0 17 14" fill="none" stroke="#9e9e9e" stroke-width="1.3" stroke-linejoin="round"><path d="M1.5 1.2h4.4l1.4 1.4h7.8v8.5H1.5z"/></svg><div class="tx lt">My Files</div><div class="dots"><i></i><i></i><i></i></div></div>
<div class="row" style="top:1104px"><svg class="ic" width="28" height="28" viewBox="0 0 28 28">
<rect x="1.7" y="1.8" width="23.4" height="23.4" rx="3" fill="none" stroke="#e35d6a" stroke-width="3"/>
<path d="M5 20.8L9.3 15.5L12.5 18.7L16.3 13.1L22 20.8z" fill="#e35d6a"/></svg><div class="tx nm">clikkle creator Image Dec...</div><div class="tx rs"><b>You shared</b><span class="bul"></span>Dec 3, 2025</div><svg class="av" width="38" height="38" viewBox="0 0 38 38">
<circle cx="15" cy="15" r="14.2" fill="none" stroke="#4a60f2" stroke-width="1.8"/>
<circle cx="15" cy="15" r="10.9" fill="#7b8ff3"/>
<circle cx="15" cy="15" r="7.7" fill="#fff"/>
<circle cx="15" cy="13.1" r="2.7" fill="#7b8ff3"/>
<ellipse cx="15" cy="19.2" rx="4.2" ry="1.6" fill="#7b8ff3"/></svg><div class="tx me">Me</div><div class="loc"></div><svg class="locf" width="17" height="14" viewBox="0 0 17 14" fill="none" stroke="#9e9e9e" stroke-width="1.3" stroke-linejoin="round"><path d="M1.5 1.2h4.4l1.4 1.4h7.8v8.5H1.5z"/></svg><div class="tx lt">My Files</div><div class="dots"><i></i><i></i><i></i></div></div>
<div class="row" style="top:1154px"><svg class="ic" width="28" height="28" viewBox="0 0 28 28">
<rect x="1.7" y="1.8" width="23.4" height="23.4" rx="3" fill="none" stroke="#e35d6a" stroke-width="3"/>
<path d="M5 20.8L9.3 15.5L12.5 18.7L16.3 13.1L22 20.8z" fill="#e35d6a"/></svg><div class="tx nm">productivity</div><div class="tx rs"><b>You uploaded</b><span class="bul"></span>Nov 28, 2025</div><svg class="av" width="38" height="38" viewBox="0 0 38 38">
<circle cx="15" cy="15" r="14.2" fill="none" stroke="#4a60f2" stroke-width="1.8"/>
<circle cx="15" cy="15" r="10.9" fill="#7b8ff3"/>
<circle cx="15" cy="15" r="7.7" fill="#fff"/>
<circle cx="15" cy="13.1" r="2.7" fill="#7b8ff3"/>
<ellipse cx="15" cy="19.2" rx="4.2" ry="1.6" fill="#7b8ff3"/></svg><div class="tx me">Me</div><div class="loc"></div><svg class="locf" width="17" height="14" viewBox="0 0 17 14" fill="none" stroke="#9e9e9e" stroke-width="1.3" stroke-linejoin="round"><path d="M1.5 1.2h4.4l1.4 1.4h7.8v8.5H1.5z"/></svg><div class="tx lt">My Files</div><div class="dots"><i></i><i></i><i></i></div></div>
<div class="row" style="top:1204px"><svg class="ic" width="28" height="28" viewBox="0 0 28 28">
<rect x="1.7" y="1.8" width="23.4" height="23.4" rx="3" fill="none" stroke="#e35d6a" stroke-width="3"/>
<path d="M5 20.8L9.3 15.5L12.5 18.7L16.3 13.1L22 20.8z" fill="#e35d6a"/></svg><div class="tx nm">clikkle team meeting phot...</div><div class="tx rs"><b>You uploaded</b><span class="bul"></span>Nov 27, 2025</div><svg class="av" width="38" height="38" viewBox="0 0 38 38">
<circle cx="15" cy="15" r="14.2" fill="none" stroke="#4a60f2" stroke-width="1.8"/>
<circle cx="15" cy="15" r="10.9" fill="#7b8ff3"/>
<circle cx="15" cy="15" r="7.7" fill="#fff"/>
<circle cx="15" cy="13.1" r="2.7" fill="#7b8ff3"/>
<ellipse cx="15" cy="19.2" rx="4.2" ry="1.6" fill="#7b8ff3"/></svg><div class="tx me">Me</div><div class="loc"></div><svg class="locf" width="17" height="14" viewBox="0 0 17 14" fill="none" stroke="#9e9e9e" stroke-width="1.3" stroke-linejoin="round"><path d="M1.5 1.2h4.4l1.4 1.4h7.8v8.5H1.5z"/></svg><div class="tx lt">My Files</div><div class="dots"><i></i><i></i><i></i></div></div>
<div class="row" style="top:1254px"><svg class="ic" width="28" height="28" viewBox="0 0 28 28">
<rect x="1.7" y="1.8" width="23.4" height="23.4" rx="3" fill="none" stroke="#e35d6a" stroke-width="3"/>
<path d="M5 20.8L9.3 15.5L12.5 18.7L16.3 13.1L22 20.8z" fill="#e35d6a"/></svg><div class="tx nm">clikkle presentation room...</div><div class="tx rs"><b>You uploaded</b><span class="bul"></span>Nov 27, 2025</div><svg class="av" width="38" height="38" viewBox="0 0 38 38">
<circle cx="15" cy="15" r="14.2" fill="none" stroke="#4a60f2" stroke-width="1.8"/>
<circle cx="15" cy="15" r="10.9" fill="#7b8ff3"/>
<circle cx="15" cy="15" r="7.7" fill="#fff"/>
<circle cx="15" cy="13.1" r="2.7" fill="#7b8ff3"/>
<ellipse cx="15" cy="19.2" rx="4.2" ry="1.6" fill="#7b8ff3"/></svg><div class="tx me">Me</div><div class="loc"></div><svg class="locf" width="17" height="14" viewBox="0 0 17 14" fill="none" stroke="#9e9e9e" stroke-width="1.3" stroke-linejoin="round"><path d="M1.5 1.2h4.4l1.4 1.4h7.8v8.5H1.5z"/></svg><div class="tx lt">My Files</div><div class="dots"><i></i><i></i><i></i></div></div>
<div class="rail" style="top:72px;left:1996px"><svg width="30" height="30" viewBox="0 0 30 30">
<rect x="6" y="10.5" width="2.9" height="14.2" rx="1.45" fill="#2055c2"/>
<rect x="10.1" y="7" width="2.9" height="14.3" rx="1.45" fill="#2467f8"/>
<rect x="14.1" y="10.5" width="2.9" height="14.2" rx="1.45" fill="#4d88f7"/>
<rect x="18" y="7" width="3" height="14.3" rx="1.45" fill="#6b9ef9"/>
<rect x="22.1" y="10.8" width="2.9" height="13.9" rx="1.45" fill="#b0cbfc"/></svg></div>
<div class="rail" style="top:112px;left:1996px"><svg width="30" height="30" viewBox="0 0 30 30">
<path d="M8.9 17.3L17.2 18.1L17.5 20.6L8.9 20z" fill="#a9c6fa"/>
<path d="M6.1 10.6L17.2 7.2L17.6 9.9L8.9 12.8V20H6.1z" fill="#3f7cf5"/>
<rect x="6.1" y="12.5" width="2.8" height="7.4" fill="#6a9df8"/>
<path d="M16.2 7.9L18.3 7L19.3 7.5L20 19.8L18.6 20.7L17 20.2z" fill="#1f50c4"/>
<path d="M10.3 20.6L11.9 25" stroke="#1f50c4" stroke-width="3" stroke-linecap="round"/>
<path d="M21.4 10.3L23.6 8.4M21.6 13.4L24.6 12.9M22 17.4L24.4 19.4" stroke="#c6d9fc" stroke-width="1"/></svg></div>
<div class="rail" style="top:159px;left:2002px"><svg width="20" height="20" viewBox="0 0 16 16" overflow="visible">
<rect x="0" y="1.4" width="14.85" height="12.6" rx="2.2" fill="#4581f7"/>
<rect x="11" y="3" width="3.85" height="9" fill="#6b9cf8"/>
<rect x="0" y="3.6" width="3.8" height="10.5" rx="1.8" fill="#1f50c0"/>
<rect x="3.7" y="10.8" width="11.15" height="2.8" fill="#abc7fc"/>
<path d="M6.3 13.9H13.2L12.6 16.1z" fill="#2a6af6"/>
<rect x="3.9" y="5" width="7.1" height="5.6" fill="#fff"/>
<circle cx="5.8" cy="7.9" r="0.95" fill="#4a70c8"/>
<circle cx="9.1" cy="7.9" r="0.95" fill="#4a70c8"/></svg></div>
<div class="rail" style="top:246px;left:2002px"><svg width="20" height="20" viewBox="0 0 16 16">
<rect x="0" y="1" width="9.2" height="4" rx="2" fill="#6a9dfa"/>
<rect x="0" y="6.3" width="9.2" height="4" rx="2" fill="#2563f8"/>
<rect x="0" y="11.8" width="9.2" height="4" rx="2" fill="#1d4fc0"/>
<circle cx="13" cy="3" r="2.2" fill="#1b4dc1"/>
<rect x="11" y="7" width="4" height="8.8" rx="2" fill="#abc9fc"/></svg></div>
<div class="rail" style="top:288px;left:2002px"><svg width="20" height="20" viewBox="0 0 16 16" overflow="visible">
<circle cx="2.75" cy="3.95" r="2.45" fill="#a9c8fc"/>
<circle cx="12.3" cy="3.95" r="2.45" fill="#3f7cf5"/>
<path d="M0.2 9.6a2.1 2.1 0 0 1 2.1-2.1h0.8a2.1 2.1 0 0 1 2.1 2.1V14.2a2.1 2.1 0 0 1-2.1 2.1h-0.8a2.1 2.1 0 0 1-2.1-2.1z" fill="#3d7ef7"/>
<path d="M0.2 9.6a2.1 2.1 0 0 1 2.1-2.1h0.8a2.1 2.1 0 0 1 2.1 2.1V11.4H0.2z" fill="#1c4fc0"/>
<path d="M9.9 9.6a2.1 2.1 0 0 1 2.1-2.1h0.8a2.1 2.1 0 0 1 2.1 2.1V14.2a2.1 2.1 0 0 1-2.1 2.1h-0.8a2.1 2.1 0 0 1-2.1-2.1z" fill="#1d4fc0"/>
<path d="M9.9 9.6a2.1 2.1 0 0 1 2.1-2.1h0.8a2.1 2.1 0 0 1 2.1 2.1V11.4H9.9z" fill="#bcd4fc"/>
<path d="M4.6 8.7L6.6 10" stroke="#a9c8fc" stroke-width="1.5" stroke-linecap="round"/>
<path d="M9 10.2L11.4 8.4" stroke="#3f7cf5" stroke-width="1.5" stroke-linecap="round"/></svg></div>
<div class="rail" style="top:332px;left:2002px"><svg width="20" height="20" viewBox="0 0 16 16">
<rect x="0" y="1.1" width="4" height="14.8" rx="2" fill="#1d4fc0"/>
<rect x="5.2" y="3.9" width="4.3" height="12" rx="2" fill="#2a6cf8"/>
<rect x="11" y="7" width="4" height="8.9" rx="2" fill="#6a9dfa"/>
<path d="M11.4 3.3l1.6 1.6l2.2-2.3" stroke="#4672d8" stroke-width="1.5" fill="none"/></svg></div>
<div class="rail" style="top:201.8px;left:2002px"><svg width="19.5" height="22.5" viewBox="6 4.5 19.5 22.5" preserveAspectRatio="none" fill="none">
<path d="M19.2 8.8L8.3 21.5C6.8 23.5 7.5 25.6 10 25.2C12.8 24.8 15.5 22.8 17.8 21.2" stroke="#2f6ef5" stroke-width="2.6" stroke-linecap="round"/>
<path d="M17.8 21.2C19.5 20.2 19.4 23.2 20.3 24.2C21.3 25.1 23 24 24.3 22.8" stroke="#a8c5fb" stroke-width="2.2" stroke-linecap="round"/>
<path d="M22.2 4.7L16.6 6.5L20.5 10.4z" fill="#1a4cc8"/></svg></div>
<div class="ab" style="left:1995px;top:367px;width:32px;height:1px;background:#dcdcdc"></div>
<svg class="ab" style="left:2001px;top:384px" width="20" height="20" viewBox="0 0 20 20"><path d="M2.5 14.8V17.5h2.7L14 8.7L11.3 6z" fill="#6b6b6b"/><path d="M12.3 5l2.7 2.7l1.6-1.6c.3-.3.3-.8 0-1.1L15 3.4c-.3-.3-.8-.3-1.1 0z" fill="#6b6b6b"/></svg>
<div class="ab" style="left:2038px;top:0.5px;width:6px;height:425.5px;border-radius:3px;background:#e6e3e3"></div>
<div class="ab" style="left:2019px;top:1137px;width:44px;height:30px;border-radius:15px;background:#efefef"></div>
<svg class="ab" style="left:2028px;top:1145px" width="12" height="14" viewBox="0 0 12 14" fill="none" stroke="#666" stroke-width="1.5"><path d="M3.5 2l5 5l-5 5"/></svg>
</body></html>
